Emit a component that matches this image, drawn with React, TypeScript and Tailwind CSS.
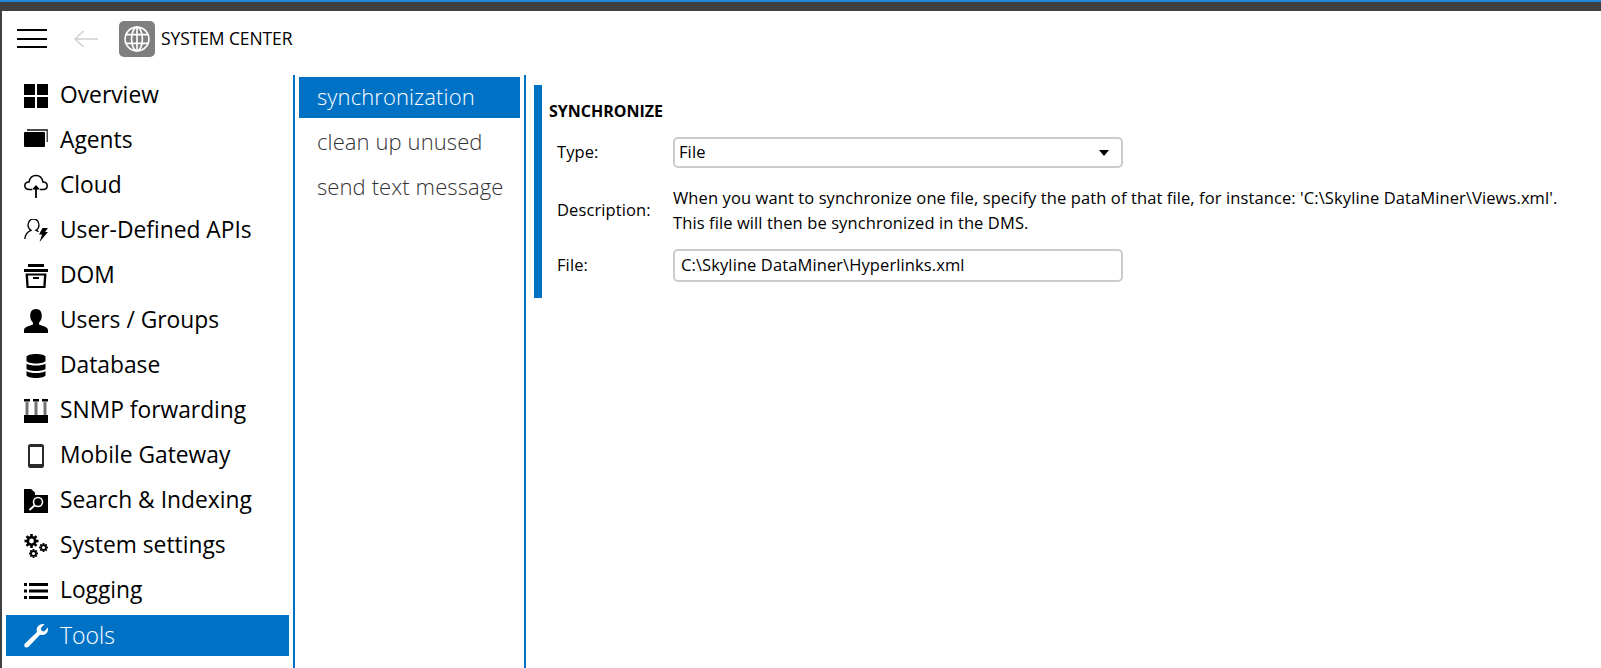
import React from 'react';

const font = { fontFamily: '"Open Sans", "Noto Sans", sans-serif' };

const Gear: React.FC<{ cx: number; cy: number; r: number; t: number }> = ({ cx, cy, r, t }) => (
  <g>
    {[0, 45, 90, 135].map((a) => (
      <rect
        key={a}
        x={cx - t / 2}
        y={cy - r}
        width={t}
        height={r * 2}
        fill="currentColor"
        transform={`rotate(${a} ${cx} ${cy})`}
      />
    ))}
    <circle cx={cx} cy={cy} r={r * 0.72} fill="currentColor" />
    <circle cx={cx} cy={cy} r={r * 0.34} fill="#fff" />
  </g>
);

const icons: Record<string, React.ReactNode> = {
  overview: (
    <g fill="currentColor">
      <rect x="0" y="0" width="11" height="11" />
      <rect x="13" y="0" width="11" height="11" />
      <rect x="0" y="13" width="11" height="11" />
      <rect x="13" y="13" width="11" height="11" />
    </g>
  ),
  agents: (
    <g fill="currentColor">
      <path d="M3 0h21v13h-1.500V2H3z" opacity="0.7" />
      <rect x="0" y="3" width="21" height="15" rx="1" />
    </g>
  ),
  cloud: (
    <g fill="none" stroke="currentColor" strokeWidth="1.500">
      <path d="M8 15.500H5C2.500 15.500.8 13.800.8 11.800.8 9.600 2.600 8 5 8c.8-4 3.600-6.500 7-6.500S18.200 4 19 8c2.400 0 4.200 1.600 4.200 3.800 0 2-1.700 3.700-4.200 3.700h-3" />
      <path d="M12 24V14" strokeWidth="1.800" />
      <path d="M8 15.500l4-4.500 4 4.500z" fill="currentColor" stroke="none" />
    </g>
  ),
  api: (
    <g>
      <path d="M.8 20c.5-5 3-7.500 6.200-8.700-2-1.300-3-3.300-3-5.300C4 2.500 6.500 0 9.500 0S15 2.500 15 6c0 2-1 4-3 5.300 1 .3 1.800.8 2.500 1.300" fill="none" stroke="currentColor" strokeWidth="1.300" />
      <path d="M18.500 9h5.500l-3 4h3l-8.500 10 2.500-7.500h-3z" fill="currentColor" />
    </g>
  ),
  dom: (
    <g fill="currentColor">
      <rect x="4" y="0" width="16" height="3" />
      <rect x="0" y="5" width="24" height="3" />
      <path d="M1.500 9.500h21L21.500 24h-19zM4 11.500l.7 10.500h14.600l.7-10.500z" fillRule="evenodd" />
      <rect x="9" y="13" width="6" height="2" />
    </g>
  ),
  users: (
    <path fill="currentColor" d="M12 0c3.800 0 5.800 2.800 5.800 6.500 0 3-1 5.500-2.800 7.300v1.700c3 1.500 9 2.200 9 5.500V24H0v-3c0-3.300 6-4 9-5.500v-1.700C7.200 12 6.200 9.500 6.200 6.500 6.200 2.800 8.200 0 12 0z" />
  ),
  database: (
    <g fill="currentColor">
      <path d="M2.500 3C2.500 1 7 0 12 0s9.500 1 9.500 3v3.500c0 2-4.500 3-9.500 3s-9.500-1-9.500-3z" />
      <path d="M2.500 9.500c1.500 1.500 5.500 2 9.500 2s8-.5 9.500-2v5c0 1.500-4.500 2.500-9.500 2.500s-9.500-1-9.500-2.500z" />
      <path d="M2.500 17c1.500 1.500 5.500 2 9.500 2s8-.5 9.500-2v4c0 2-4.500 3-9.500 3s-9.500-1-9.500-3z" />
    </g>
  ),
  snmp: (
    <g fill="currentColor">
      <rect x="0" y="0" width="6" height="2.500" />
      <rect x="9" y="0" width="6" height="2.500" />
      <rect x="18" y="0" width="6" height="2.500" />
      <rect x="1.500" y="3" width="3" height="13" opacity="0.55" />
      <rect x="10.500" y="3" width="3" height="13" opacity="0.55" />
      <rect x="19.500" y="3" width="3" height="13" opacity="0.55" />
      <rect x="0" y="16" width="24" height="8" />
    </g>
  ),
  mobile: (
    <path fillRule="evenodd" fill="#2a2a2a" d="M6.500 0h11A2.500 2.500 0 0 1 20 2.500v19a2.500 2.500 0 0 1-2.500 2.500h-11A2.500 2.500 0 0 1 4 21.500v-19A2.500 2.500 0 0 1 6.500 0zM6 3v17h12V3z" />
  ),
  search: (
    <g>
      <path fill="currentColor" d="M0 0h7l4 3.500V6h13v18H0z" />
      <circle cx="14" cy="13" r="4.500" fill="none" stroke="#fff" strokeWidth="1.600" />
      <path d="M10.500 16.500l-5 4.500" stroke="#fff" strokeWidth="2" />
    </g>
  ),
  settings: (
    <g>
      <Gear cx={7.500} cy={7} r={7} t={2.600} />
      <Gear cx={19.500} cy={13.500} r={4.500} t={1.800} />
      <Gear cx={9.500} cy={19.500} r={4.500} t={1.800} />
    </g>
  ),
  logging: (
    <g fill="currentColor">
      <rect x="0" y="4" width="3" height="3" />
      <rect x="0" y="10.500" width="3" height="3" />
      <rect x="0" y="17" width="3" height="3" />
      <rect x="5" y="4" width="19" height="3" />
      <rect x="5" y="10.500" width="19" height="3" />
      <rect x="5" y="17" width="19" height="3" />
    </g>
  ),
  tools: (
    <path fill="currentColor" d="M24 3.500c.4 3-.6 5.500-2.800 6.800-1.700 1-3.500 1-5.200.4L4.500 22.800c-1 1-2.600 1.100-3.500.2S0 20.500 1 19.500L13 8c-.6-1.700-.5-3.600.6-5.200C15 .7 17.500-.3 20.500.2L16.800 4l.6 2.800 2.800.6z" />
  ),
};

const navItems = [
  { label: 'Overview', icon: 'overview' },
  { label: 'Agents', icon: 'agents' },
  { label: 'Cloud', icon: 'cloud' },
  { label: 'User-Defined APIs', icon: 'api' },
  { label: 'DOM', icon: 'dom' },
  { label: 'Users / Groups', icon: 'users' },
  { label: 'Database', icon: 'database' },
  { label: 'SNMP forwarding', icon: 'snmp' },
  { label: 'Mobile Gateway', icon: 'mobile' },
  { label: 'Search & Indexing', icon: 'search' },
  { label: 'System settings', icon: 'settings' },
  { label: 'Logging', icon: 'logging' },
  { label: 'Tools', icon: 'tools', active: true },
];

const subItems = [
  { label: 'synchronization', active: true },
  { label: 'clean up unused' },
  { label: 'send text message' },
];

const NavRow: React.FC<{ label: string; icon: string; active?: boolean }> = ({ label, icon, active }) => (
  <div className={`flex h-[41px] items-center gap-3 pl-[18px] ${active ? 'bg-[#0072c6] text-[23px] font-light text-white' : 'text-[22.800px] text-black'}`}>
    <svg viewBox="0 0 24 24" className="h-6 w-6 shrink-0">{icons[icon]}</svg>
    <span className="pb-[1px]">{label}</span>
  </div>
);

export default function App() {
  return (
    <div className="flex h-[668px] w-[1601px] flex-col overflow-hidden bg-white text-black" style={font}>
      <div className="h-[11px] shrink-0 border-t-2 border-[#1e88d8] bg-[#404040]" />
      <div className="flex min-h-0 flex-1 flex-col border-l-2 border-[#404040]">
        {/* Title bar */}
        <div className="flex h-16 shrink-0 items-center pb-[9px] pl-[15px]">
          <div className="flex w-[30px] flex-col gap-[6.500px]">
            <div className="h-[2px] bg-black" />
            <div className="h-[2px] bg-black" />
            <div className="h-[2px] bg-black" />
          </div>
          <svg viewBox="0 0 24 18" className="ml-[27px] h-[18px] w-6" fill="none" stroke="#d0d0d0" strokeWidth="1.500">
            <path d="M24 9H1M9.500 1 1 9l8.500 8" />
          </svg>
          <div className="ml-[21px] flex h-9 w-9 items-center justify-center rounded-[5px] bg-[#7f7f7f]">
            <svg viewBox="0 0 24 24" className="h-[26px] w-[26px]" fill="none" stroke="#fff" strokeWidth="1.500">
              <circle cx="12" cy="12" r="11" />
              <ellipse cx="12" cy="12" rx="5" ry="11" />
              <path d="M12 1v22M1.500 8h21M1.500 16h21" />
            </svg>
          </div>
          <span className="ml-[6px] text-[17.500px] tracking-[-0.1px]">SYSTEM CENTER</span>
        </div>

        <div className="flex min-h-0 flex-1">
          {/* Main navigation */}
          <div className="flex w-[293px] shrink-0 flex-col gap-1 border-r-2 border-[#0072c6] pl-1 pr-1">
            {navItems.map((item) => (
              <NavRow key={item.label} {...item} />
            ))}
          </div>

          {/* Sub navigation */}
          <div className="flex w-[231px] shrink-0 flex-col gap-1 border-r-2 border-[#0072c6] px-1 pt-[2px]">
            {subItems.map((item) => (
              <div
                key={item.label}
                className={`flex h-[41px] items-center pb-[2px] pl-[18px] text-[22px] font-light tracking-[0.1px] ${item.active ? 'bg-[#0072c6] text-white' : 'text-[#333333]'}`}
              >
                {item.label}
              </div>
            ))}
          </div>

          {/* Content */}
          <div className="min-w-0 flex-1 pl-2 pt-[10px]">
            <div className="flex h-[213px] border-l-8 border-[#0072c6] pl-[7px] pt-[17px]">
              <div className="flex-1">
                <h2 className="h-[18px] text-[16px] font-bold leading-[18px]">SYNCHRONIZE</h2>
                <div className="mt-[17px] grid grid-cols-[116px_1fr] pl-2 text-[16.500px] tracking-[0.1px]">
                  <div className="flex h-[31px] items-center">Type:</div>
                  <div className="flex h-[31px] w-[450px] items-center justify-between rounded-[5px] border-2 border-[#cccccc] pl-1 pr-[12px]">
                    <span>File</span>
                    <svg viewBox="0 0 10 6" className="h-[6px] w-[10px]"><path d="M0 0h10L5 6z" fill="#000" /></svg>
                  </div>
                  <div className="mt-[17px] flex items-center">Description:</div>
                  <div className="mt-[17px] whitespace-nowrap leading-[25px]">
                    When you want to synchronize one file, specify the path of that file, for instance: 'C:\Skyline DataMiner\Views.xml'.
                    <br />
                    This file will then be synchronized in the DMS.
                  </div>
                  <div className="mt-[14px] flex h-[33px] items-center">File:</div>
                  <div className="mt-[14px] flex h-[33px] w-[450px] items-center rounded-[5px] border-2 border-[#cccccc] pl-[6px]">
                    C:\Skyline DataMiner\Hyperlinks.xml
                  </div>
                </div>
              </div>
            </div>
          </div>
        </div>
      </div>
    </div>
  );
}
